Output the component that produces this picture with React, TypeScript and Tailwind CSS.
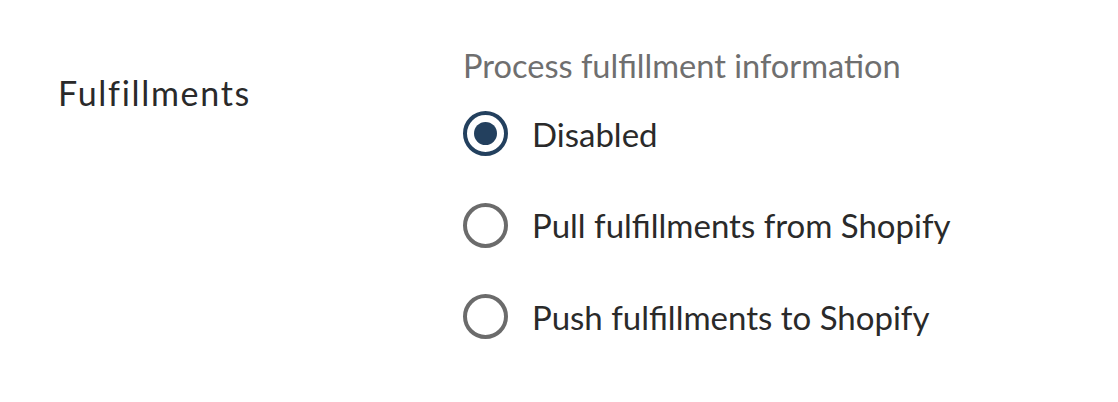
import { useState } from 'react'

const options = [
    { id: 'disabled', label: 'Disabled' },
    { id: 'pull', label: 'Pull fulfillments from Shopify' },
    { id: 'push', label: 'Push fulfillments to Shopify' },
]

export default function App() {
    const [selected, setSelected] = useState('disabled')

    return (
        <div className="w-[1118px] h-[402px] bg-white font-['Lato',sans-serif] text-[#2a2a2a]">
            <div className="flex pt-[48px] pl-[58px]">
                {/* Label column */}
                <div className="w-[405px] pt-[26px]">
                    <h2 className="text-[34px] leading-[38px] tracking-[1.7px]">Fulfillments</h2>
                </div>

                {/* Radio group */}
                <div className="flex flex-col">
                    <p className="text-[32.6px] leading-[36px] text-[#6f6f6f]">Process fulfillment information</p>
                    <div className="flex flex-col gap-[46.5px] mt-[27px]">
                        {options.map((opt) => {
                            const checked = selected === opt.id
                            return (
                                <label key={opt.id} className="flex items-center gap-[24px] cursor-pointer">
                                    <span
                                        className={`flex items-center justify-center w-[45px] h-[45px] rounded-full border-[4px] ${checked ? 'border-[#23405e]' : 'border-[#6b6b6b]'}`}
                                        onClick={() => setSelected(opt.id)}
                                    >
                                        {checked && <span className="w-[23px] h-[23px] rounded-full bg-[#23405e]" />}
                                    </span>
                                    <span className="text-[33px] leading-[36px]">{opt.label}</span>
                                </label>
                            )
                        })}
                    </div>
                </div>
            </div>
        </div>
    )
}
